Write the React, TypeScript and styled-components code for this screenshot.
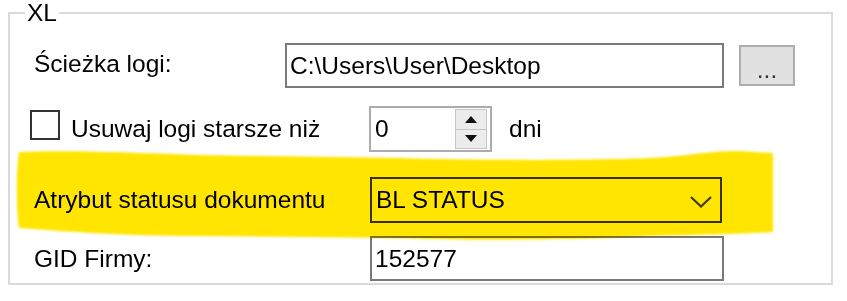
import React from "react";
import styled, { createGlobalStyle } from "styled-components";

const Global = createGlobalStyle`
  html, body { margin: 0; padding: 0; background: #fff; }
  body { font-family: "Liberation Sans", Arial, sans-serif; color: #000; }
  * { box-sizing: border-box; }
`;

const Page = styled.div`
  position: relative;
  width: 847px;
  height: 301px;
  padding: 12px 0 0 8px;
  overflow: hidden;
`;

const GroupBox = styled.div`
  position: relative;
  width: 825px;
  height: 273px;
  border: 2px solid #dadada;
  padding-top: 29px;
  display: flex;
  flex-direction: column;
`;

const Legend = styled.span`
  position: absolute;
  top: -15px;
  left: 15px;
  padding: 0 2px;
  background: #fff;
  font-size: 24.5px;
  line-height: 28px;
  color: #000;
`;

const Row = styled.div<{ $h: number; $mt: number; $pl: number }>`
  display: flex;
  align-items: center;
  height: ${(p) => p.$h}px;
  margin-top: ${(p) => p.$mt}px;
  padding-left: ${(p) => p.$pl}px;
`;

const Label = styled.span<{ $w: number; $ml?: number; $mb?: number }>`
  width: ${(p) => p.$w}px;
  margin-left: ${(p) => p.$ml ?? 0}px;
  margin-bottom: ${(p) => p.$mb ?? 0}px;
  font-size: 24.5px;
  white-space: nowrap;
  flex-shrink: 0;
`;

const TextBox = styled.div<{ $w: number }>`
  width: ${(p) => p.$w}px;
  height: 100%;
  border: 2px solid #7a7a7a;
  background: #fff;
  padding-left: 3px;
  display: flex;
  align-items: center;
  font-size: 24.5px;
  white-space: nowrap;
  flex-shrink: 0;
`;

const BrowseButton = styled.div`
  width: 56px;
  height: 41px;
  margin-left: 15px;
  border: 2px solid #adadad;
  background: #e1e1e1;
  display: flex;
  align-items: center;
  justify-content: center;
  padding-top: 8px;
  font-size: 24.5px;
  color: #333;
  flex-shrink: 0;
`;

const CheckBox = styled.div`
  width: 30px;
  height: 30px;
  border: 2px solid #333;
  background: #fff;
  margin-bottom: 8px;
  flex-shrink: 0;
`;

const Numeric = styled.div`
  width: 123px;
  height: 100%;
  border: 2px solid #acacac;
  background: #fff;
  display: flex;
  align-items: center;
  padding-left: 4px;
  font-size: 24.5px;
  flex-shrink: 0;
`;

const NumValue = styled.span`
  flex: 1;
`;

const Spinner = styled.div`
  width: 32px;
  height: 40px;
  margin-right: 3px;
  border: 1px solid #c6c6c6;
  background: #ececec;
  display: flex;
  flex-direction: column;
`;

const SpinHalf = styled.div<{ $top?: boolean }>`
  flex: 1;
  display: flex;
  align-items: center;
  justify-content: center;
  border-bottom: ${(p) => (p.$top ? "1px solid #c6c6c6" : "none")};
`;

const Unit = styled.span`
  margin-left: 17px;
  font-size: 24.5px;
`;

const Combo = styled.div`
  width: 352px;
  height: 100%;
  border: 2px solid #363636;
  background: #fff;
  padding-left: 4px;
  padding-right: 8px;
  display: flex;
  align-items: center;
  justify-content: space-between;
  font-size: 24.5px;
  flex-shrink: 0;
`;

const Chevron = styled.svg`
  margin-top: 4px;
`;

const Highlight = styled.svg`
  position: absolute;
  top: 0;
  left: 0;
  pointer-events: none;
  mix-blend-mode: multiply;
  z-index: 2;
`;

export default function App() {
  return (
    <Page>
      <Global />
      <GroupBox>
        <Legend>XL</Legend>
        <Row $h={45} $mt={0} $pl={24}>
          <Label $w={251} $mb={3}>Ścieżka logi:</Label>
          <TextBox $w={439}>C:\Users\User\Desktop</TextBox>
          <BrowseButton>...</BrowseButton>
        </Row>
        <Row $h={46} $mt={18} $pl={20}>
          <CheckBox />
          <Label $w={298} $ml={11}>Usuwaj logi starsze niż</Label>
          <Numeric>
            <NumValue>0</NumValue>
            <Spinner>
              <SpinHalf $top>
                <svg width="12" height="7" viewBox="0 0 12 7">
                  <path d="M0 7 L6 0 L12 7 Z" fill="#111" />
                </svg>
              </SpinHalf>
              <SpinHalf>
                <svg width="12" height="7" viewBox="0 0 12 7">
                  <path d="M0 0 L6 7 L12 0 Z" fill="#111" />
                </svg>
              </SpinHalf>
            </Spinner>
          </Numeric>
          <Unit>dni</Unit>
        </Row>
        <Row $h={46} $mt={25} $pl={24}>
          <Label $w={336}>Atrybut statusu dokumentu</Label>
          <Combo>
            <span>BL STATUS</span>
            <Chevron width="22" height="12" viewBox="0 0 22 12">
              <polyline points="1,1 11,10.5 21,1" fill="none" stroke="#404040" strokeWidth="2.2" />
            </Chevron>
          </Combo>
        </Row>
        <Row $h={45} $mt={13} $pl={24}>
          <Label $w={336}>GID Firmy:</Label>
          <TextBox $w={354}>152577</TextBox>
        </Row>
      </GroupBox>
      <Highlight width="847" height="301" viewBox="0 0 847 301">
        <defs>
          <filter id="soft" x="-5%" y="-20%" width="110%" height="140%">
            <feGaussianBlur stdDeviation="0.8" />
          </filter>
        </defs>
        <path
          filter="url(#soft)"
          fill="#ffe500"
          d="M19,152 C60,150 120,152 200,155 L400,158 C500,161 600,160 650,158 C690,156 705,151 740,151 L773,153 L773,232 C740,234 700,235 650,236 C560,240 480,241 400,238 L200,236 C120,236 60,231 19,228 C16,210 16,170 19,152 Z"
        />
      </Highlight>
    </Page>
  );
}
